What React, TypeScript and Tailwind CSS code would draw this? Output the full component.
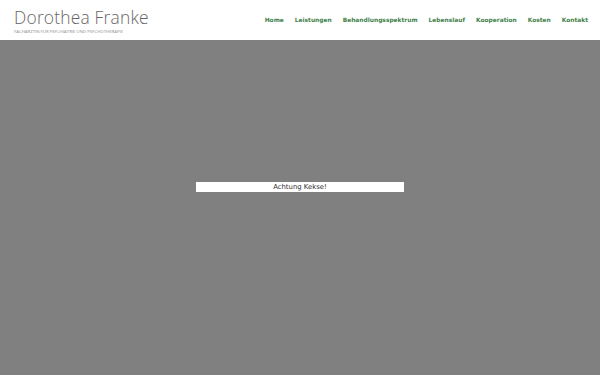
import React from "react";

const nav = ["Home", "Leistungen", "Behandlungsspektrum", "Lebenslauf", "Kooperation", "Kosten", "Kontakt"];

export default function App() {
  return (
    <div className="w-[600px] h-[375px] flex flex-col bg-white overflow-hidden">
      <header className="h-[40px] flex items-center justify-between pl-[14px] pr-[12px] bg-white">
        <div className="flex flex-col mt-[1px]">
          <div className="text-[17.4px] leading-[20px] font-light text-[#666666] tracking-[0.2px]" style={{ fontFamily: "'Open Sans', sans-serif" }}>
            Dorothea Franke
          </div>
          <div className="text-[4.3px] leading-[6px] text-[#8a8a8a] uppercase mt-[1px]" style={{ fontFamily: "'Open Sans', sans-serif" }}>
            Fachärztin für Psychiatrie und Psychotherapie
          </div>
        </div>
        <nav className="flex items-center gap-[11px] mt-[1px]">
          {nav.map((n) => (
            <span key={n} className="text-[5.9px] font-bold text-[#3f7f4a]" style={{ fontFamily: "'DejaVu Sans', sans-serif" }}>
              {n}
            </span>
          ))}
        </nav>
      </header>
      <main className="flex-1 bg-[#808080] flex items-center justify-center">
        <div className="w-[208px] h-[10px] bg-white flex items-center justify-center mt-[-41px] text-[6.9px] text-[#333333]" style={{ fontFamily: "'DejaVu Sans', sans-serif" }}>
          Achtung Kekse!
        </div>
      </main>
    </div>
  );
}
